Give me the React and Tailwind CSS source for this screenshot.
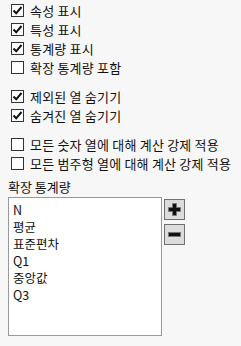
function Check({ checked }) {
    return (
        <span className="flex h-[13px] w-[13px] shrink-0 items-center justify-center border border-[#333333] bg-white">
            {checked && (
                <svg width="11" height="11" viewBox="0 0 11 11">
                    <path d="M1.5 5.5 L4.2 8.3 L9.5 2" fill="none" stroke="#111" strokeWidth="2" />
                </svg>
            )}
        </span>
    );
}

function Row({ checked, label }) {
    return (
        <div className="flex h-[19px] items-center gap-[6px] pl-[11px]">
            <Check checked={checked} />
            <span className="leading-none tracking-[0.2px]">{label}</span>
        </div>
    );
}

const stats = ['N', '평균', '표준편차', 'Q1', '중앙값', 'Q3'];

export default function App() {
    return (
        <div
            className="h-[346px] w-[241px] bg-[#f7f7f7] text-[13px] text-[#111]"
            style={{ fontFamily: '"Noto Sans CJK KR", "Noto Sans", sans-serif' }}
        >
            <div className="pt-[1px]">
                <Row checked label="속성 표시" />
                <Row checked label="특성 표시" />
                <Row checked label="통계량 표시" />
                <Row label="확장 통계량 포함" />
            </div>
            <div className="mt-[10px]">
                <Row checked label="제외된 열 숨기기" />
                <Row checked label="숨겨진 열 숨기기" />
            </div>
            <div className="mt-[10px]">
                <Row label="모든 숫자 열에 대해 계산 강제 적용" />
                <Row label="모든 범주형 열에 대해 계산 강제 적용" />
            </div>
            <div className="mt-[7px] pl-[8px] leading-none">확장 통계량</div>
            <div className="mt-[4px] flex gap-[2px] pl-[8px]">
                <div className="h-[139px] w-[154px] border border-[#999999] bg-white pl-[4px] pt-[3px]">
                    {stats.map(s => (
                        <div key={s} className="h-[17px] overflow-hidden text-[12.5px] leading-[17px]">
                            {s}
                        </div>
                    ))}
                </div>
                <div className="mt-[2px] flex flex-col gap-[4px]">
                    <button className="flex h-[21px] w-[21px] items-center justify-center border border-[#707070] bg-[#dcdcdc]">
                        <svg width="13" height="13" viewBox="0 0 13 13">
                            <path d="M4.5 0.5h4v4h4v4h-4v4h-4v-4h-4v-4h4z" fill="#111" stroke="#777" strokeWidth="0.8" />
                        </svg>
                    </button>
                    <button className="flex h-[21px] w-[21px] items-center justify-center border border-[#707070] bg-[#dcdcdc]">
                        <svg width="13" height="13" viewBox="0 0 13 13">
                            <rect x="0.5" y="4.5" width="12" height="4" fill="#111" stroke="#777" strokeWidth="0.8" />
                        </svg>
                    </button>
                </div>
            </div>
        </div>
    );
}
